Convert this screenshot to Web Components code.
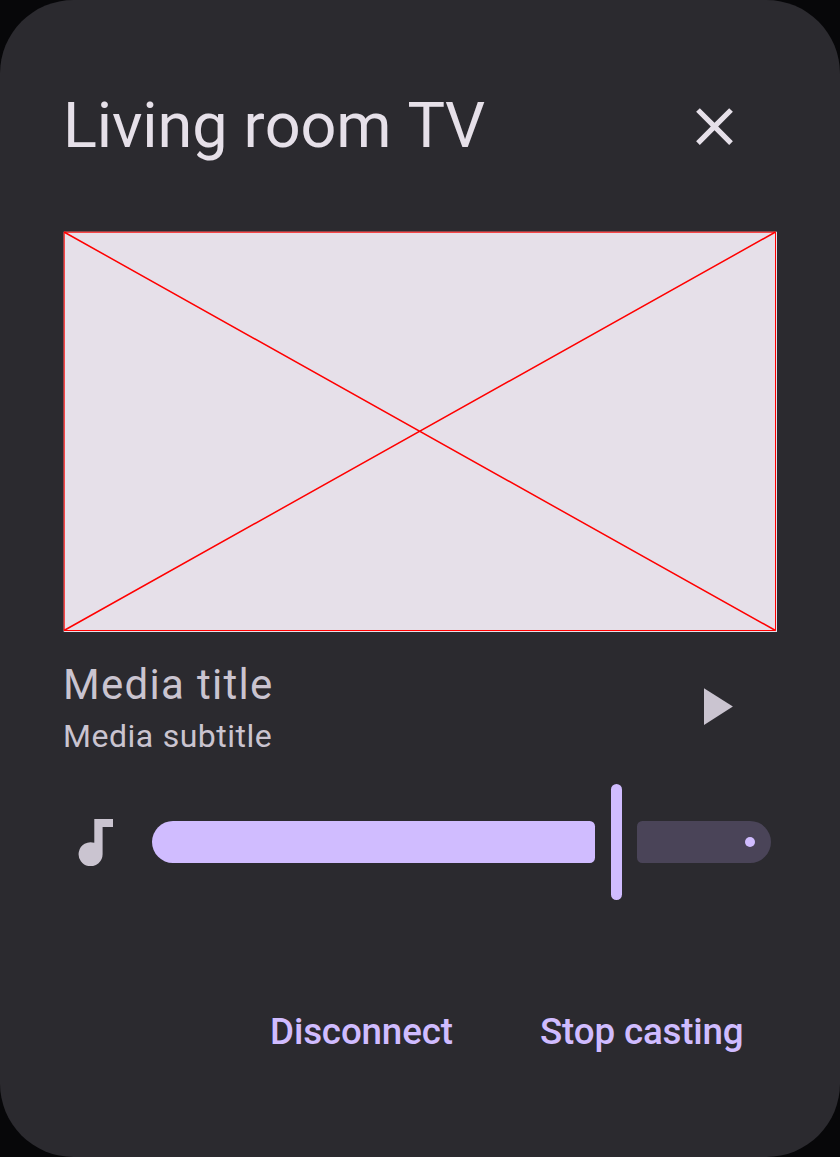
<!DOCTYPE html>
<html lang="en">
<head>
<meta charset="utf-8">
<title>Living room TV</title>
<style>
html, body { margin: 0; height: 100%; background: #070709; }
body { font-family: Roboto, sans-serif; overflow: hidden; }
</style>
</head>
<body>
<cast-dialog>
  <dialog-header slot="header">Living room TV</dialog-header>
  <media-artwork></media-artwork>
  <media-row>Media title<span slot="subtitle">Media subtitle</span></media-row>
  <volume-slider></volume-slider>
  <text-button slot="actions">Disconnect</text-button>
  <text-button slot="actions">Stop casting</text-button>
</cast-dialog>
<script>
const define = (name, html) => {
  const template = document.createElement('template');
  template.innerHTML = html;
  customElements.define(name, class extends HTMLElement {
    constructor() {
      super();
      this.attachShadow({ mode: 'open' }).append(template.content.cloneNode(true));
    }
  });
};

define('cast-dialog', `
<style>
:host { display: flex; flex-direction: column; box-sizing: border-box; width: 840px; height: 1157px;
  padding: 84px 63px 99px; border-radius: 73.5px; background: #2b2a2f; color: #e6e0e9; }
main { display: flex; flex-direction: column; margin-top: 63px; }
footer { display: flex; justify-content: flex-end; gap: 24.3px; margin-top: auto; }
</style>
<slot name="header"></slot><main><slot></slot></main><footer><slot name="actions"></slot></footer>`);

define('dialog-header', `
<style>
:host { display: flex; justify-content: space-between; align-items: center; height: 84px; padding-right: 31px;
  font-size: 63px; line-height: 84px; white-space: nowrap; }
svg { display: block; width: 63px; height: 63px; fill: #e6e0e9; }
span { letter-spacing: -.15px; word-spacing: .7px; font-kerning: none; }
</style>
<span><slot></slot></span>
<svg viewBox="0 0 24 24"><path d="M19 6.41L17.59 5 12 10.59 6.41 5 5 6.41 10.59 12 5 17.59 6.41 19 12 13.41 17.59 19 19 17.59 13.41 12z"/></svg>`);

define('media-artwork', `
<style>:host, svg { display: block; width: 714px; height: 401px; }</style>
<svg viewBox="0 0 714 401"><rect x=".7" y=".7" width="713.3" height="400.3" fill="#e6e0e9"/>
<path d="M1.2 1.2H712.5V399.5H1.2Z" fill="none" stroke="#ff0000" stroke-width="1"/>
<path d="M1 1L712.5 399.5M712.5 1L1 399.5" fill="none" stroke="#ff0000" stroke-width="1.5"/></svg>`);

define('media-row', `
<style>
:host { display: flex; justify-content: space-between; margin-top: 21px; height: 105px; padding-right: 31px; color: #cac4d0; }
.title { font-size: 42px; line-height: 63px; letter-spacing: 1.3px; }
.subtitle { font-size: 32px; line-height: 40px; letter-spacing: .5px; word-spacing: .6px; }
svg { display: block; width: 63px; height: 63px; margin-top: 22px; fill: #cac4d0; }
</style>
<div><div class="title"><slot></slot></div><div class="subtitle"><slot name="subtitle"></slot></div></div>
<svg viewBox="0 0 24 24"><path d="M8 5v14l11-7z"/></svg>`);

define('volume-slider', `
<style>
:host { display: flex; align-items: center; height: 116px; margin-top: 26px; padding-left: 15px; }
svg { display: block; width: 36px; height: 48px; margin-right: 38px; fill: #cac4d0; }
.active { width: 443px; height: 42px; border-radius: 21px 5.25px 5.25px 21px; background: #d0bcff; }
.thumb { width: 11px; height: 116px; margin: 0 15.4px 0 16px; border-radius: 5.5px; background: #d0bcff; }
.rest { display: flex; align-items: center; justify-content: flex-end; box-sizing: border-box; width: 133.6px; height: 42px;
  padding-right: 15.75px; border-radius: 5.25px 21px 21px 5.25px; background: #4a4458; }
.stop { width: 10.5px; height: 10.5px; border-radius: 50%; background: #d0bcff; }
</style>
<svg viewBox="0 0 36 48"><path d="M16.3 1H35V9H24.6V36.3A12 12 0 1 1 16.3 24.8Z"/></svg>
<div class="active"></div><div class="thumb"></div><div class="rest"><div class="stop"></div></div>`);

define('text-button', `
<style>
:host { display: block; padding: 0 31.5px; color: #d0bcff; font-size: 36.75px; font-weight: 500;
  line-height: 53px; letter-spacing: -.17px; white-space: nowrap; }
:host(:last-child) { padding-right: 33.5px; }
</style><slot></slot>`);
</script>
</body>
</html>
